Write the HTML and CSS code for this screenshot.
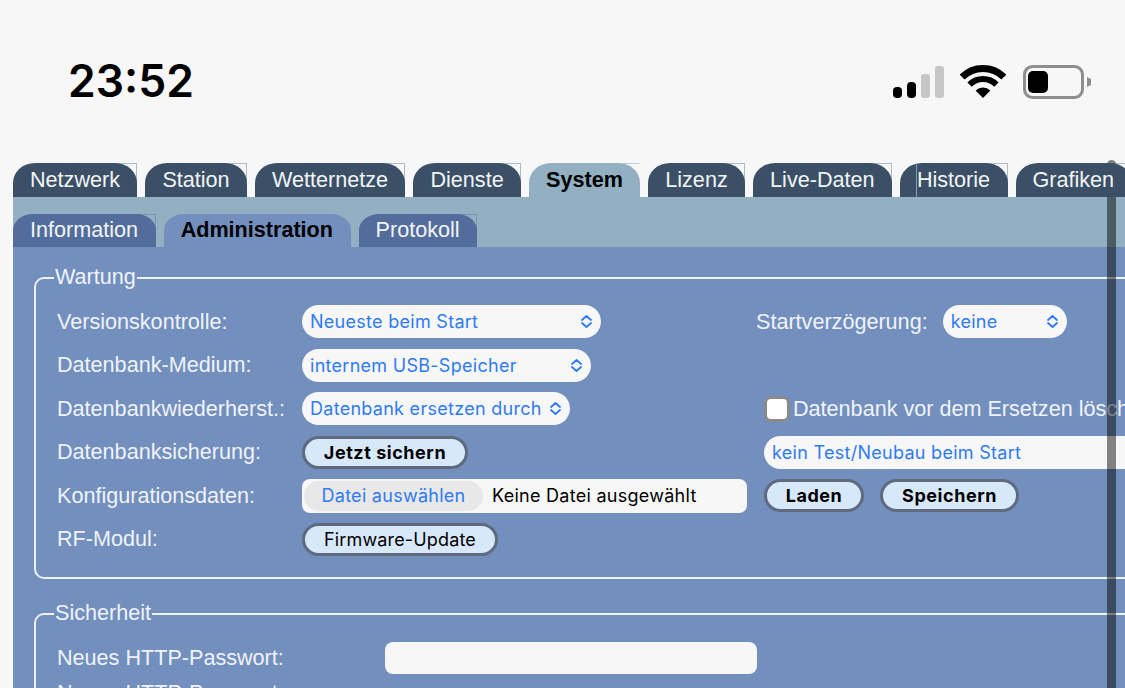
FILE: index.html
```html
<!DOCTYPE html>
<html lang="de">
<head>
<meta charset="utf-8">
<title>System – Administration</title>
<link rel="stylesheet" href="styles.css">
</head>
<body>
<svg class="defs" width="0" height="0" aria-hidden="true"><symbol id="chev" viewBox="0 0 13 13"><path d="M2 5 L6.5 1 L11 5 M2 8 L6.5 12 L11 8" fill="none" stroke="#2f7bf5" stroke-width="1.8" stroke-linecap="round" stroke-linejoin="round"/></symbol></svg>
<header class="status">
  <div class="time">23:52</div>
  <div class="status-icons">
    <svg class="signal" width="51" height="32" viewBox="0 0 51 32"><rect x="0" y="21" width="9" height="11" rx="4" fill="#000"/><rect x="14" y="16" width="9" height="16" rx="4" fill="#000"/><rect x="28" y="8" width="9" height="24" rx="3" fill="#c6c6c6"/><rect x="42" y="0" width="9" height="32" rx="3" fill="#c6c6c6"/></svg>
    <svg class="wifi" width="46" height="33" viewBox="0 0 46 33"><path d="M2.14 12.14 A29.5 29.5 0 0 1 43.86 12.14" fill="none" stroke="#000" stroke-width="7"/><path d="M9.57 19.57 A19 19 0 0 1 36.43 19.57" fill="none" stroke="#000" stroke-width="6"/><path d="M23 33 L15.6 25.6 A10.5 10.5 0 0 1 30.4 25.6 Z" fill="#000"/></svg>
    <svg class="battery" width="68" height="34" viewBox="0 0 68 34"><rect x="1.5" y="1.5" width="58" height="31" rx="8" fill="none" stroke="#8e8e8e" stroke-width="3"/><rect x="5" y="6" width="20" height="22" rx="5" fill="#000"/><path d="M64 12 L68 14 V20 L64 22 Z" fill="#8e8e8e"/></svg>
  </div>
</header>

<div class="page">
  <nav class="tabs">
    <a class="tab"><span class="face">Netzwerk</span></a>
    <a class="tab"><span class="face">Station</span></a>
    <a class="tab"><span class="face">Wetternetze</span></a>
    <a class="tab"><span class="face">Dienste</span></a>
    <a class="tab on"><span class="face">System</span></a>
    <a class="tab"><span class="face">Lizenz</span></a>
    <a class="tab"><span class="face">Live-Daten</span></a>
    <a class="tab"><span class="face"><span class="marked">Historie</span></span></a>
    <a class="tab"><span class="face">Grafiken</span></a>
  </nav>
  <nav class="subtabs">
    <a class="tab sub"><span class="face">Information</span></a>
    <a class="tab sub on"><span class="face">Administration</span></a>
    <a class="tab sub"><span class="face">Protokoll</span></a>
  </nav>
  <main class="panel">
    <fieldset class="group">
      <legend>Wartung</legend>
      <div class="grid">
        <label>Versionskontrolle:</label>
        <div class="sel w299"><span>Neueste beim Start</span><svg class="chev"><use href="#chev"/></svg></div>
        <div class="right flush"><label class="start">Startverzögerung:</label><div class="sel w124"><span>keine</span><svg class="chev"><use href="#chev"/></svg></div></div>

        <label>Datenbank-Medium:</label>
        <div class="sel w289"><span>internem USB-Speicher</span><svg class="chev"><use href="#chev"/></svg></div>
        <div class="right"></div>

        <label>Datenbankwiederherst.:</label>
        <div class="sel w268"><span>Datenbank ersetzen durch</span><svg class="chev"><use href="#chev"/></svg></div>
        <div class="right"><span class="check"></span><label>Datenbank vor dem Ersetzen löschen</label></div>

        <label>Datenbanksicherung:</label>
        <div><button class="btn strong w166">Jetzt sichern</button></div>
        <div class="right"><div class="sel w500"><span>kein Test/Neubau beim Start</span></div></div>

        <label>Konfigurationsdaten:</label>
        <div class="file"><span class="pick">Datei auswählen</span><span class="none">Keine Datei ausgewählt</span></div>
        <div class="right btns"><button class="btn strong w100">Laden</button><button class="btn strong w139">Speichern</button></div>

        <label>RF-Modul:</label>
        <div><button class="btn w196">Firmware-Update</button></div>
        <div class="right"></div>
      </div>
    </fieldset>
    <fieldset class="group second">
      <legend>Sicherheit</legend>
      <div class="pw">
        <label>Neues HTTP-Passwort:</label><div class="input"></div>
        <label>Neues HTTP-Passwort:</label><div></div>
      </div>
    </fieldset>
  </main>
</div>
<div class="scrollbar"></div>
</body>
</html>
```
FILE: styles.css
```css
* { box-sizing: border-box; }
html, body { margin: 0; height: 688px; overflow: hidden; }
body { background: #f7f7f7; font-family: "Liberation Sans", Arial, sans-serif; font-size: 21.6px; color: #f0f3f8; position: relative; }
.defs { position: absolute; }

.status { height: 163px; display: flex; justify-content: space-between; align-items: flex-start; padding: 0 34px 0 68px; }
.time { font-family: Inter, sans-serif; font-weight: 600; font-size: 44.5px; line-height: 54px; margin-top: 54px; color: #000; }
.status-icons { display: flex; align-items: flex-end; margin-top: 65px; height: 33px; }
.signal { margin-right: 16px; }
.wifi { margin-right: 17px; }
.battery { margin-bottom: -1px; }

.page { margin-left: 13px; width: 1400px; }
.tabs, .subtabs { display: flex; gap: 8px; }
.tabs { height: 34px; }
.subtabs { background: #92b0c2; padding-top: 17px; height: 50px; }

.tab { display: block; position: relative; }
.tab::after { content: ""; position: absolute; top: 0; right: 0; width: 24px; height: 24px; border-top: 1px solid #a8bbc9; border-right: 1px solid #a8bbc9; }
.face { display: block; position: relative; z-index: 1; height: 34px; line-height: 33px; padding: 0 17.4px 0 17px; background: #3b5066; color: #f2f4f6; border-radius: 22px 22px 0 0 / 20px 20px 0 0; }
.tab.on::after { border-right-color: transparent; border-top-color: #b9d0dc; }
.tab.on .face { background: #92b0c2; color: #000; font-weight: 700; }
.marked { display: inline-block; border-left: 1px solid #8b9cab; height: 34px; margin-left: -1px; }

.tab.sub::after { border-color: #7d93b3; }
.tab.sub .face { background: #526d9c; height: 33px; line-height: 31px; padding-right: 17.6px; border-radius: 20px 20px 0 0 / 16px 16px 0 0; }
.tab.sub.on::after { border-color: transparent; }
.tab.sub.on .face { background: #728fbe; color: #000; }

.panel { background: #728fbe; padding: 17px 0 0 21px; height: 441px; }
.group { margin: 0; padding: 14px 0 21px 21px; border: 2px solid #eef1f6; border-radius: 10px; min-width: 0; }
.group legend { padding: 0 1px 2px; margin-left: -3px; line-height: 25px; }
.second { margin-top: 21px; padding-top: 14px; }

.grid { display: grid; grid-template-columns: 245px 453px 600px; grid-auto-rows: 33.5px; row-gap: 10px; align-items: center; }
.grid label, .pw label { white-space: nowrap; }
.right { display: flex; align-items: center; padding-left: 9px; }
.right.flush { padding-left: 1px; }
.start { margin-right: 15px; }
.btns { gap: 16px; }

.sel { height: 33px; border-radius: 17px; background: #f7f7f7; color: #2f7bf5; font-family: Inter, sans-serif; font-size: 18px; letter-spacing: 0.28px; display: flex; align-items: center; justify-content: space-between; padding: 0 8px; white-space: nowrap; }
.chev { width: 13px; height: 13px; flex: none; }
.w299 { width: 299px; }
.w289 { width: 289px; }
.w268 { width: 268px; }
.w124 { width: 124px; }
.w500 { width: 500px; }

.btn { height: 33px; border: 3px solid #5f6a7e; border-radius: 17px; background: #d8e8fb; color: #000; font-family: Inter, sans-serif; font-size: 18px; letter-spacing: 0.15px; padding: 0; display: block; }
.strong { font-weight: 700; letter-spacing: 0.55px; }
.w166 { width: 166px; }
.w100 { width: 100px; }
.w139 { width: 139px; }
.w196 { width: 196px; }

.file { width: 445px; height: 34px; background: #f7f7f7; border-radius: 8px; display: flex; align-items: center; padding-left: 2px; font-family: Inter, sans-serif; font-size: 18px; letter-spacing: 0.27px; white-space: nowrap; }
.pick { width: 179px; height: 30px; line-height: 30px; text-align: center; border-radius: 15px; background: #e8e8e8; color: #2f7bf5; }
.none { margin-left: 9px; color: #000; }

.check { width: 26px; height: 26px; flex: none; border: 3px solid #8a8a8a; border-radius: 7px; background: #fff; margin-right: 3px; }

.pw { display: grid; grid-template-columns: 328px 372px; grid-auto-rows: 33px; row-gap: 2px; align-items: center; }
.input { height: 32px; background: #f7f7f7; border-radius: 8px; }

.scrollbar { position: absolute; left: 1107px; top: 160px; width: 9px; height: 540px; border-radius: 5px; background: rgba(0, 0, 0, 0.48); }
```
